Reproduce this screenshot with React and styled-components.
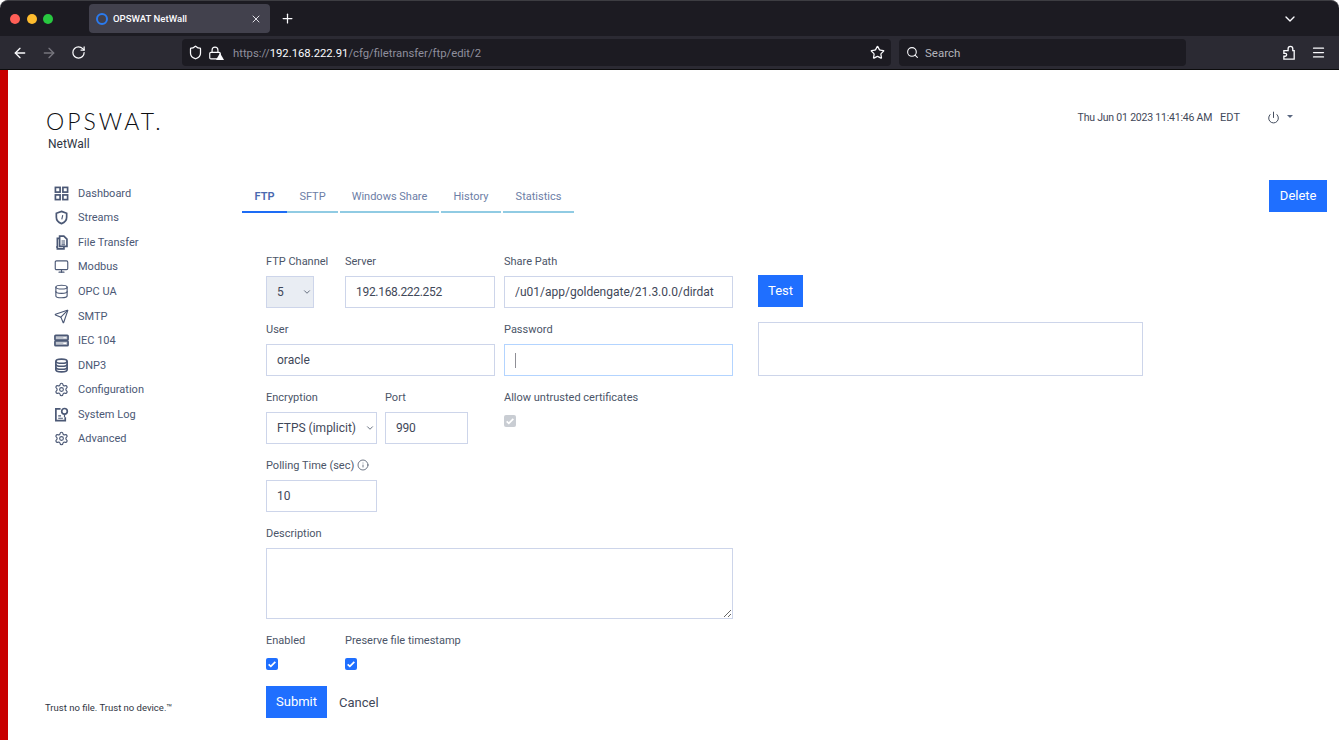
import React from 'react'
import styled, { createGlobalStyle } from 'styled-components'
import {
  ArrowLeft,
  ArrowRight,
  ChevronDown,
  Database,
  Info,
  Lock,
  Menu,
  Monitor,
  Plus,
  Power,
  RotateCw,
  Search,
  Send,
  Settings,
  Shield,
  Star,
  X,
} from 'lucide-react'

const GlobalStyle = createGlobalStyle`
  html, body {
    margin: 0;
    padding: 0;
    background: #fff;
    overflow: hidden;
  }
  * {
    box-sizing: border-box;
  }
`

// nav icons that lucide has no close match for
const Glyph = ({ size = 16, strokeWidth = 1.8, children }) => (
  <svg
    viewBox="0 0 16 16"
    width={size}
    height={size}
    fill="none"
    stroke="currentColor"
    strokeWidth={strokeWidth}
    style={{ flex: 'none' }}
  >
    {children}
  </svg>
)

const GridIcon = (props) => (
  <Glyph {...props}>
    <rect x="1.5" y="1.5" width="5" height="5" />
    <rect x="9.5" y="1.5" width="5" height="5" />
    <rect x="1.5" y="9.5" width="5" height="5" />
    <rect x="9.5" y="9.5" width="5" height="5" />
  </Glyph>
)

const ShieldIcon = (props) => (
  <Glyph {...props}>
    <path d="M8 1.5l5.5 2v4.2c0 3.2-2.3 5.6-5.5 6.8-3.2-1.2-5.5-3.6-5.5-6.8V3.5z" />
    <path d="M9.3 5.5L8.3 10" strokeWidth="1.2" />
  </Glyph>
)

const FilesIcon = (props) => (
  <Glyph {...props}>
    <path d="M6 1.2h4.5l3.3 3.3v7.7H6z" />
    <path d="M6 3.6H3.6v9.2h-1.4M3.6 12.8v1.9h7v-2.5" />
    <path d="M8 6.5h3.8M8 8.5h3.8M8 10.4h3.8" strokeWidth="1.1" />
  </Glyph>
)

const ServerIcon = (props) => (
  <Glyph {...props}>
    <rect x="1" y="2.5" width="14" height="5" rx="0.8" fill="currentColor" fillOpacity="0.35" />
    <rect x="1" y="8.5" width="14" height="5" rx="0.8" fill="currentColor" fillOpacity="0.35" />
    <path d="M10 5h3M10 11h3" strokeWidth="1.2" stroke="#fff" />
  </Glyph>
)

const StackIcon = (props) => (
  <Glyph {...props}>
    <ellipse cx="8" cy="3.4" rx="6" ry="2.2" />
    <path d="M2 3.4v9.2c0 1.2 2.7 2.2 6 2.2s6-1 6-2.2V3.4" />
    <path d="M2 6.6c0 1.2 2.7 2.2 6 2.2s6-1 6-2.2M2 9.8c0 1.2 2.7 2.2 6 2.2s6-1 6-2.2" />
  </Glyph>
)

const LogIcon = (props) => (
  <Glyph {...props}>
    <path d="M7 2H2v12.5h10V11" />
    <circle cx="11.2" cy="4.6" r="3" />
    <path d="M11.2 7.6V11M4.5 9.5h3M4.5 12h5" strokeWidth="1.3" />
  </Glyph>
)

const PuzzleIcon = () => (
  <Glyph size={15} strokeWidth={1.4}>
    <path d="M2 6h4.5V4a2.5 2.5 0 0 1 5 0v2H13v9H2v-3h1.5a1.5 1.5 0 0 0 0-3H2z" />
  </Glyph>
)

const navItems = [
  { label: 'Dashboard', icon: GridIcon },
  { label: 'Streams', icon: ShieldIcon },
  { label: 'File Transfer', icon: FilesIcon },
  { label: 'Modbus', icon: Monitor },
  { label: 'OPC UA', icon: Database },
  { label: 'SMTP', icon: Send },
  { label: 'IEC 104', icon: ServerIcon },
  { label: 'DNP3', icon: StackIcon },
  { label: 'Configuration', icon: Settings },
  { label: 'System Log', icon: LogIcon },
  { label: 'Advanced', icon: Settings },
]

const tabs = [
  { label: 'FTP', width: 45, active: true },
  { label: 'SFTP', width: 51 },
  { label: 'Windows Share', width: 99 },
  { label: 'History', width: 60 },
  { label: 'Statistics', width: 71 },
]

const App = () => {
  return (
    <Window>
      <GlobalStyle />
      <TabStrip>
        <Lights>
          <Light color="#ff5f57" />
          <Light color="#febc2e" />
          <Light color="#28c840" />
        </Lights>
        <BrowserTab>
          <Favicon />
          <TabTitle>OPSWAT NetWall</TabTitle>
          <X size={12} color="#e0e0e6" />
        </BrowserTab>
        <NewTab>
          <Plus size={15} />
        </NewTab>
        <TabListBtn>
          <ChevronDown size={16} />
        </TabListBtn>
      </TabStrip>

      <Toolbar>
        <ToolBtn><ArrowLeft size={16} /></ToolBtn>
        <ToolBtn dim><ArrowRight size={16} /></ToolBtn>
        <ToolBtn><RotateCw size={15} /></ToolBtn>
        <UrlBar>
          <UrlIcons>
            <Shield size={15} />
            <LockWrap>
              <Lock size={14} />
              <Warn />
            </LockWrap>
          </UrlIcons>
          <Url>
            https://<b>192.168.222.91</b>/cfg/filetransfer/ftp/edit/2
          </Url>
          <Star size={15} color="#fbfbfe" />
        </UrlBar>
        <SearchBar>
          <Search size={13} color="#fbfbfe" />
          <span>Search</span>
        </SearchBar>
        <ToolEnd>
          <PuzzleIcon />
          <Menu size={15} />
        </ToolEnd>
      </Toolbar>

      <Page>
        <RedStrip />
        <Sidebar>
          <Brand>
            <Logo>OPSWAT.</Logo>
            <Product>NetWall</Product>
          </Brand>
          <NavList>
            {navItems.map(({ label, icon: Icon }) => (
              <NavItem key={label}>
                <Icon size={15} strokeWidth={1.8} />
                <span>{label}</span>
              </NavItem>
            ))}
          </NavList>
          <Tagline>Trust no file. Trust no device.™</Tagline>
        </Sidebar>

        <Main>
          <TopInfo>
            <DateText>Thu Jun 01 2023 11:41:46 AM</DateText>
            <span>EDT</span>
            <PowerMenu>
              <Power size={13} strokeWidth={1.8} />
              <Caret />
            </PowerMenu>
          </TopInfo>

          <TabRow>
            <Tabs>
              {tabs.map((t) => (
                <Tab key={t.label} $active={t.active} $width={t.width}>
                  {t.label}
                </Tab>
              ))}
            </Tabs>
            <Button $wide>Delete</Button>
          </TabRow>

          <FormArea>
            <FormCol>
              <Row>
                <Field $width={48}>
                  <Label>FTP Channel</Label>
                  <SelectWrap>
                    <Select disabled defaultValue="5" $disabled>
                      <option>5</option>
                    </Select>
                    <SelectArrow size={10} strokeWidth={2} />
                  </SelectWrap>
                </Field>
                <Field $width={150} $left={31}>
                  <Label>Server</Label>
                  <Input defaultValue="192.168.222.252" $tight />
                </Field>
                <Field $width={229} $left={9}>
                  <Label>Share Path</Label>
                  <Input defaultValue="/u01/app/goldengate/21.3.0.0/dirdat" />
                </Field>
              </Row>

              <Row>
                <Field $width={229}>
                  <Label>User</Label>
                  <Input defaultValue="oracle" />
                </Field>
                <Field $width={229} $left={9}>
                  <Label>Password</Label>
                  <PasswordWrap>
                    <Input type="password" $focus />
                    <TextCaret />
                  </PasswordWrap>
                </Field>
              </Row>

              <Row>
                <Field $width={111}>
                  <Label>Encryption</Label>
                  <SelectWrap>
                    <Select defaultValue="FTPS (implicit)">
                      <option>FTPS (implicit)</option>
                    </Select>
                    <SelectArrow size={10} strokeWidth={2} />
                  </SelectWrap>
                </Field>
                <Field $width={83} $left={8}>
                  <Label>Port</Label>
                  <Input defaultValue="990" $tight />
                </Field>
                <Field $width={229} $left={36}>
                  <Label>Allow untrusted certificates</Label>
                  <CheckBox $off>
                    <Tick />
                  </CheckBox>
                </Field>
              </Row>

              <Row>
                <Field $width={111}>
                  <Label>
                    Polling Time (sec)
                    <InfoIcon size={12} strokeWidth={1.6} />
                  </Label>
                  <Input defaultValue="10" />
                </Field>
              </Row>

              <Row>
                <Field $width={467}>
                  <Label>Description</Label>
                  <TextArea />
                </Field>
              </Row>

              <CheckRow>
                <Field $width={79}>
                  <Label>Enabled</Label>
                  <CheckBox>
                    <Tick />
                  </CheckBox>
                </Field>
                <Field $width={160}>
                  <Label>Preserve file timestamp</Label>
                  <CheckBox>
                    <Tick />
                  </CheckBox>
                </Field>
              </CheckRow>

              <Actions>
                <Button>Submit</Button>
                <CancelLink>Cancel</CancelLink>
              </Actions>
            </FormCol>

            <SideCol>
              <Button>Test</Button>
              <ResultBox />
            </SideCol>
          </FormArea>
        </Main>
      </Page>
    </Window>
  )
}

const Tick = () => (
  <svg viewBox="0 0 12 12" width="10" height="10" fill="none" stroke="#fff" strokeWidth="2">
    <path d="M2 6.5l2.6 2.4L10 3.4" />
  </svg>
)

const Window = styled.div`
  width: 1339px;
  height: 740px;
  display: flex;
  flex-direction: column;
  overflow: hidden;
  background: #fff;
  font-family: 'Roboto', 'Liberation Sans', sans-serif;
`

const TabStrip = styled.div`
  height: 36px;
  flex: none;
  display: flex;
  align-items: center;
  background: #1c1b22;
  border-top: 1px solid #3d3d42;
  border-radius: 8px 8px 0 0;
  padding-left: 10px;
`

const Lights = styled.div`
  display: flex;
  gap: 6.5px;
  width: 79px;
`

const Light = styled.span`
  width: 10px;
  height: 10px;
  border-radius: 50%;
  background: ${(p) => p.color};
`

const BrowserTab = styled.div`
  width: 181px;
  height: 29px;
  display: flex;
  align-items: center;
  padding: 0 8px 0 7px;
  background: #42414d;
  border-radius: 4px;
  color: #fbfbfe;
`

const Favicon = styled.span`
  width: 12px;
  height: 12px;
  border: 2px solid #2a7bf0;
  border-radius: 50%;
  margin-right: 5px;
`

const TabTitle = styled.span`
  flex: 1;
  font-size: 9.6px;
  font-weight: 500;
`

const NewTab = styled.div`
  width: 35px;
  display: flex;
  justify-content: center;
  color: #fbfbfe;
`

const TabListBtn = styled.div`
  margin-left: auto;
  margin-right: 41px;
  display: flex;
  color: #fbfbfe;
`

const Toolbar = styled.div`
  height: 34px;
  flex: none;
  display: flex;
  align-items: center;
  background: #2b2a33;
  padding-left: 5px;
  border-bottom: 1px solid #0c0c0d;
`

const ToolBtn = styled.div`
  width: 29.5px;
  display: flex;
  justify-content: center;
  color: ${(p) => (p.dim ? '#77767e' : '#fbfbfe')};
`

const UrlBar = styled.div`
  width: 709px;
  height: 27px;
  margin-left: 88.5px;
  display: flex;
  align-items: center;
  background: #1c1b22;
  border-radius: 4px;
  padding: 0 6px;
  color: #fbfbfe;
`

const UrlIcons = styled.div`
  display: flex;
  align-items: center;
  gap: 5px;
  width: 45px;
`

const LockWrap = styled.span`
  position: relative;
  display: flex;
`

const Warn = styled.span`
  position: absolute;
  right: -2px;
  bottom: 0;
  width: 0;
  height: 0;
  border-left: 4px solid transparent;
  border-right: 4px solid transparent;
  border-bottom: 7px solid #fbfbfe;
`

const Url = styled.span`
  flex: 1;
  padding-top: 1px;
  font-size: 11.3px;
  color: #8f8f9d;
  b {
    font-weight: 400;
    color: #fbfbfe;
  }
`

const SearchBar = styled.div`
  width: 287px;
  height: 27px;
  margin-left: 8px;
  display: flex;
  align-items: center;
  gap: 6px;
  background: #1c1b22;
  border-radius: 4px;
  padding-left: 7px;
  font-size: 11.5px;
  color: #b4b4bb;
`

const ToolEnd = styled.div`
  display: flex;
  align-items: center;
  gap: 14px;
  margin-left: 96px;
  color: #fbfbfe;
`

const Page = styled.div`
  flex: 1;
  display: flex;
  min-height: 0;
`

const RedStrip = styled.div`
  width: 8px;
  flex: none;
  background: #c80000;
`

const Sidebar = styled.aside`
  width: 234px;
  flex: none;
  display: flex;
  flex-direction: column;
  padding: 38px 0 27px 37px;
`

const Brand = styled.div`
  display: flex;
  flex-direction: column;
  color: #0c0d10;
`

const Logo = styled.div`
  font-family: 'Lato', sans-serif;
  font-weight: 300;
  font-size: 23px;
  line-height: 26px;
  letter-spacing: 3px;
  height: 26px;
  margin-left: 1px;
`

const Product = styled.div`
  font-size: 12px;
  line-height: 16px;
  margin: 2px 0 0 3px;
  color: #2f3542;
`

const NavList = styled.nav`
  display: flex;
  flex-direction: column;
  margin-top: 29px;
  padding-left: 9px;
`

const NavItem = styled.div`
  height: 24.55px;
  display: flex;
  align-items: center;
  gap: 9px;
  font-size: 11px;
  color: #4b5875;
`

const Tagline = styled.div`
  margin-top: auto;
  font-size: 9.5px;
  color: #2f3542;
`

const Main = styled.main`
  flex: 1;
  display: flex;
  flex-direction: column;
  min-width: 0;
  padding-right: 12px;
`

const TopInfo = styled.div`
  height: 110px;
  flex: none;
  display: flex;
  justify-content: flex-end;
  gap: 8px;
  padding: 41px 34px 0 0;
  font-size: 11px;
  color: #3f4859;
`

const DateText = styled.span`
  font-size: 10.5px;
  line-height: 13px;
  letter-spacing: -0.02em;
`

const PowerMenu = styled.div`
  display: flex;
  align-items: flex-start;
  gap: 7px;
  margin-left: 19px;
  color: #3f4859;
`

const Caret = styled.span`
  margin-top: 4px;
  width: 0;
  height: 0;
  border-left: 3.5px solid transparent;
  border-right: 3.5px solid transparent;
  border-top: 3.5px solid #5a6780;
`

const TabRow = styled.div`
  height: 32px;
  flex: none;
  display: flex;
  justify-content: space-between;
  align-items: flex-start;
`

const Tabs = styled.div`
  display: flex;
`

const Tab = styled.div`
  width: ${(p) => p.$width}px;
  height: 33px;
  margin-right: ${(p) => (p.$active ? 0 : 2)}px;
  padding-top: 1px;
  display: flex;
  align-items: center;
  justify-content: center;
  font-size: 11px;
  font-weight: ${(p) => (p.$active ? 600 : 400)};
  color: ${(p) => (p.$active ? '#4a69b0' : '#6c7ea6')};
  border-bottom: 2px solid ${(p) => (p.$active ? '#1d6cf5' : '#90cbe3')};
`

const Button = styled.button`
  height: 32px;
  padding: 0 ${(p) => (p.$wide ? 10.5 : 10)}px 1px;
  border: none;
  background: #1f6fff;
  color: #fff;
  font-family: inherit;
  font-size: 13px;
  min-width: 44px;
  flex: none;
`

const FormArea = styled.div`
  display: flex;
  gap: 25px;
  margin: 41px 0 0 24px;
`

const FormCol = styled.div`
  width: 467px;
  display: flex;
  flex-direction: column;
`

const Row = styled.div`
  display: flex;
  margin-bottom: 13px;
`

const CheckRow = styled(Row)`
  margin-bottom: 0;
`

const Field = styled.div`
  width: ${(p) => p.$width}px;
  margin-left: ${(p) => p.$left || 0}px;
  flex: none;
`

const Label = styled.label`
  display: flex;
  align-items: center;
  gap: 3px;
  height: 18px;
  margin-bottom: 5px;
  font-size: 11px;
  line-height: 16px;
  white-space: nowrap;
  color: #4b5568;
`

const InfoIcon = styled(Info)`
  color: #4b5568;
  margin-top: -2px;
`

const Input = styled.input`
  display: block;
  width: 100%;
  height: 32px;
  padding: 0 10px;
  margin: 0;
  border: ${(p) => (p.$focus ? '1.5px solid #b3d4ff' : '1px solid #cdd5ea')};
  border-radius: 0;
  outline: none;
  background: #fff;
  font-family: inherit;
  font-size: 12px;
  letter-spacing: ${(p) => (p.$tight ? '-0.3px' : '0')};
  color: #3f4859;
`

const PasswordWrap = styled.div`
  position: relative;
`

const TextCaret = styled.span`
  position: absolute;
  left: 11px;
  top: 9px;
  width: 1px;
  height: 15px;
  background: #8f8f96;
`

const SelectWrap = styled.div`
  position: relative;
`

const Select = styled.select`
  display: block;
  width: 100%;
  height: 32px;
  padding: 0 0 0 10px;
  border: 1px solid #cdd5ea;
  border-radius: 0;
  appearance: none;
  outline: none;
  opacity: 1;
  background: ${(p) => (p.$disabled ? '#e9edf3' : '#fff')};
  font-family: inherit;
  font-size: 12px;
  color: #3f4859;
`

const SelectArrow = styled(ChevronDown)`
  position: absolute;
  right: 2px;
  top: 11px;
  color: #4b5568;
`

const TextArea = styled.textarea`
  display: block;
  width: 100%;
  height: 71px;
  border: 1px solid #cdd5ea;
  border-radius: 0;
  outline: none;
  margin: 0;
  padding: 8px 10px;
`

const CheckBox = styled.span`
  display: flex;
  align-items: center;
  justify-content: center;
  width: 12px;
  height: 12px;
  margin-top: 8px;
  border-radius: 2px;
  background: ${(p) => (p.$off ? '#c9cdd3' : '#1f6fff')};
`

const Actions = styled.div`
  display: flex;
  align-items: center;
  gap: 12px;
  margin-top: 16px;
`

const CancelLink = styled.a`
  font-size: 13px;
  color: #3f4859;
`

const SideCol = styled.div`
  width: 385px;
  display: flex;
  flex-direction: column;
  align-items: flex-start;
  gap: 15px;
  padding-top: 22px;
`

const ResultBox = styled.div`
  width: 100%;
  height: 54px;
  border: 1px solid #cdd5ea;
`

export default App
